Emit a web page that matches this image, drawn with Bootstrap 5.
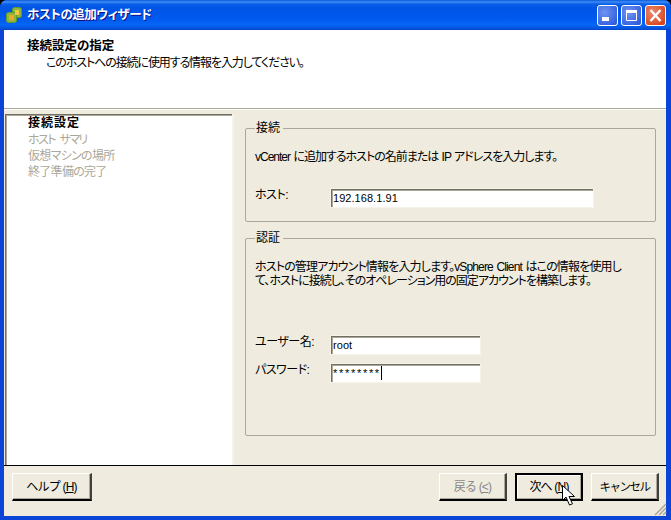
<!DOCTYPE html>
<html lang="ja">
<head>
<meta charset="utf-8">
<title>ホストの追加ウィザード</title>
<link rel="stylesheet" href="https://cdn.jsdelivr.net/npm/bootstrap@5.3.0/dist/css/bootstrap.min.css">
<style>
html,body{margin:0;height:520px;overflow:hidden;background:#000}
body{font-family:"Liberation Sans","Noto Sans CJK JP",sans-serif;font-size:12px;line-height:16px;color:#000;font-feature-settings:"palt"}
.xp-win{width:671px;height:520px;background:#0a45d8;border-radius:7px 7px 0 0;position:relative;overflow:hidden}
.xp-title{height:30px;padding:0 5px 0 6px;background:linear-gradient(180deg,#0a58de 0,#3f8cf3 2px,#0a5fe8 4px,#0055e5 8px,#0058ee 18px,#0566f5 25px,#0550d8 29px,#0340c8 30px)}
.xp-title-text{color:#fff;font-weight:700;font-size:12.5px;letter-spacing:-.45px;margin-left:5px;text-shadow:1px 1px 0 #0f1089}
.xp-btn{width:21px;height:21px;border:1px solid #fff;border-radius:3px;margin-left:3px;background:radial-gradient(circle at 35% 35%,#6f94f2,#2f5cdd 85%);display:block}
.xp-btn-close{background:radial-gradient(circle at 35% 35%,#ea8a70,#d8431a 85%)}
.xp-body{height:486px;margin:0 5px 0 4px;background:#efecdf}
.xp-head{height:79px;background:#fff;padding:8px 0 0 23px;border-bottom:1px solid #aca899}
.xp-head b{display:block;font-size:12.5px}
.xp-head span{display:block;margin-left:19px;margin-top:1px;letter-spacing:-1.1px}
.xp-gap{height:1px;background:#fff}
.xp-main{height:355px}
.xp-steps{width:229px;margin:4px 0 0 1px;padding:1px 0 0 23px;background:#fff;border:solid #f6f4ea;border-width:0 2px 0 0;box-shadow:inset 1px 1px 0 #716f64,inset 2px 2px 0 #aca899;flex:none}
.xp-steps li{list-style:none;height:16px}
.xp-steps .fw-bold{letter-spacing:1px;height:17px}
.xp-off{color:#aca899;letter-spacing:-.7px}
.xp-spaced{letter-spacing:-1.6px;word-spacing:3px}
.xp-right{padding:10px 10px 0 11px;flex:1;min-width:0}
.xp-group{border:1px solid #aca899;border-radius:2px;margin:0;padding:0 0 0 9px;position:relative}
.xp-group legend{float:none;width:auto;font-size:12px;line-height:16px;margin:0;padding:0 3px 0 1px}
.xp-g1{height:102px;margin-bottom:8px}
.xp-g2{height:206px}
.xp-group p{margin:14px 0 0;line-height:14px;letter-spacing:-1px;word-spacing:1px}
.xp-group p .xp-line{letter-spacing:-.85px}
.xp-row{height:20px}
.xp-row label{width:75px;flex:none;padding-bottom:6px;letter-spacing:-.5px}
.xp-r0{margin-top:24px}
.xp-r1{margin-top:47px}
.xp-field{height:20px;border:1px solid #f6f4ea;border-radius:0;padding:2px 0 0 2px;background:#fff;font-size:11px;line-height:14px;letter-spacing:.05px;box-shadow:inset 1px 1px 0 #716f64,inset 2px 2px 0 #aca899;color:#000;font-family:"Liberation Sans",sans-serif}
.xp-w1{width:264px}.xp-w2{width:151px}
.xp-stars{letter-spacing:1.7px}
.xp-caret{display:inline-block;width:1px;height:14px;background:#000;vertical-align:top}
.xp-foot{height:50px;border-top:1px solid #000;padding:7px 7px 0 8px}
.xp-act{height:28px;width:68px;padding:0;border:solid;border-color:#fff #404040 #000 #fff;border-width:1px 2px 2px 1px;border-radius:0;background:#efecdf;font-size:12px;line-height:16px;color:#000;box-shadow:inset -1px -1px 0 #aca899;letter-spacing:-.8px;margin-left:8px}
.xp-act:disabled{color:#888;opacity:1;background:#efecdf;border-color:#fff #404040 #000 #fff}
.xp-wide{width:80px;margin-left:0}
.xp-act-on{border:2px solid #000;box-shadow:inset -1px -1px 0 #aca899,inset 1px 1px 0 #fff}
.xp-cancel{font-size:11.5px;letter-spacing:-1.5px}
.xp-cursor{position:absolute;left:562px;top:485px}
.xp-grip{position:absolute;left:654px;top:503px}
</style>
</head>
<body>
<div class="xp-win">
  <div class="xp-title d-flex align-items-center">
    <svg width="16" height="16" viewBox="0 0 16 16"><rect x="6.500" y=".5" width="9" height="10" rx="2" fill="#8fb53c" stroke="#5f9a2a"/><rect x=".5" y="5.500" width="10" height="10" rx="2" fill="#8fb53c" stroke="#5f9a2a"/><rect x="3" y="8" width="5" height="5" fill="#eda92a"/><rect x="9" y="3" width="4" height="5" fill="#f4c53e"/></svg>
    <span class="xp-title-text flex-grow-1">ホストの追加ウィザード</span>
    <span class="xp-btn"><svg width="19" height="19" viewBox="0 0 19 19" class="d-block"><rect x="4" y="11" width="7" height="4" fill="#fff"/></svg></span>
    <span class="xp-btn"><svg width="19" height="19" viewBox="0 0 19 19" class="d-block"><path d="M4.500 4.500h10v10h-10z" fill="none" stroke="#fff"/><rect x="4" y="4" width="11" height="3" fill="#fff"/></svg></span>
    <span class="xp-btn xp-btn-close"><svg width="19" height="19" viewBox="0 0 19 19" class="d-block"><path d="M4.500 4l10 11M14.500 4l-10 11" stroke="#fff" stroke-width="2.4"/></svg></span>
  </div>
  <div class="xp-body">
    <div class="xp-head"><b>接続設定の指定</b><span>このホストへの接続に使用する情報を入力してください。</span></div>
    <div class="xp-gap"></div>
    <div class="xp-main d-flex">
      <ul class="xp-steps">
        <li class="fw-bold">接続設定</li>
        <li class="xp-off xp-spaced">ホスト サマリ</li>
        <li class="xp-off">仮想マシンの場所</li>
        <li class="xp-off">終了準備の完了</li>
      </ul>
      <div class="xp-right">
        <fieldset class="xp-group xp-g1">
          <legend>接続</legend>
          <p>vCenter に追加するホストの名前または IP アドレスを入力します。</p>
          <div class="xp-row d-flex align-items-center xp-r0"><label>ホスト:</label><div class="xp-field xp-w1">192.168.1.91</div></div>
        </fieldset>
        <fieldset class="xp-group xp-g2">
          <legend>認証</legend>
          <p><span class="xp-line">ホストの管理アカウント情報を入力します。vSphere Client はこの情報を使用し</span><br>て、ホストに接続し、そのオペレーション用の固定アカウントを構築します。</p>
          <div class="xp-row d-flex align-items-center xp-r1"><label>ユーザー名:</label><div class="xp-field xp-w2">root</div></div>
          <div class="xp-row d-flex align-items-center mt-2"><label>パスワード:</label><div class="xp-field xp-w2"><span class="xp-stars">********</span><span class="xp-caret"></span></div></div>
        </fieldset>
      </div>
    </div>
    <div class="xp-foot d-flex">
      <button class="btn xp-act xp-wide">ヘルプ (<u>H</u>)</button>
      <button class="btn xp-act ms-auto" disabled>戻る (<u>&lt;</u>)</button>
      <button class="btn xp-act xp-act-on">次へ (<u>N</u>)</button>
      <button class="btn xp-act xp-cancel">キャンセル</button>
    </div>
  </div>
  <svg class="xp-cursor" width="14" height="21" viewBox="0 0 14 21"><path d="M.5.500v15l3.500-3.500 3.500 8 3-1.200-3.500-7.300h5.500z" fill="#fff" stroke="#000"/></svg>
  <svg class="xp-grip" width="13" height="13" viewBox="0 0 13 13"><path d="M12 1L1 12M12 5l-7 7M12 9l-3 3" stroke="#aca899" stroke-width="1.500"/></svg>
</div>
<script src="https://cdn.jsdelivr.net/npm/bootstrap@5.3.0/dist/js/bootstrap.bundle.min.js"></script>
</body>
</html>
